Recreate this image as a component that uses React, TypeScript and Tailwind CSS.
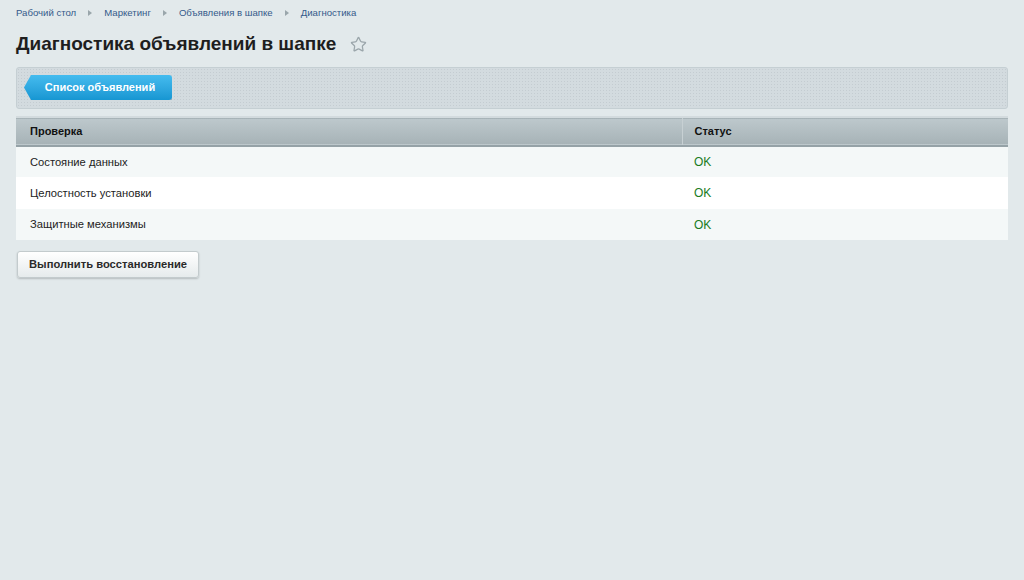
import { Star } from "lucide-react";

const crumbs = ["Рабочий стол", "Маркетинг", "Объявления в шапке", "Диагностика"];

const checks = [
  { name: "Состояние данных", status: "OK" },
  { name: "Целостность установки", status: "OK" },
  { name: "Защитные механизмы", status: "OK" },
];

export default function App() {
  return (
    <div className="min-h-[580px] bg-[#e2e9eb] px-4 font-['Liberation_Sans',Arial,sans-serif] text-[#222]">
      {/* Breadcrumbs */}
      <div className="flex h-[26px] items-center pt-px text-[9.6px] text-[#34598a]">
        {crumbs.map((c, i) => (
          <div key={c} className="flex items-center">
            {i > 0 && (
              <span className="mx-[12px] h-0 w-0 border-y-[3px] border-l-[4px] border-y-transparent border-l-[#9aa6ab]" />
            )}
            <span>{c}</span>
          </div>
        ))}
      </div>

      {/* Title */}
      <div className="flex h-[36px] items-center">
        <h1 className="text-[19px] font-bold text-[#1e1e1e]">Диагностика объявлений в шапке</h1>
        <Star className="ml-[14px] mt-px h-[17px] w-[17px] text-[#9ba6ab]" strokeWidth={1.8} />
      </div>

      {/* Toolbar */}
      <div className="mt-[5px] flex h-[42px] items-center rounded-[3px] border border-[#c5cfd3] bg-[#d3dbdf] bg-[radial-gradient(#c4ccd1_0.8px,transparent_0.9px)] bg-[length:3px_3px] pl-[7px]">
        <button className="-mt-px flex h-[25px] w-[148px] items-center justify-center rounded-r-[3px] bg-gradient-to-b from-[#44bcef] to-[#1696d2] pl-[4px] text-[11px] font-bold text-white shadow-[0_1px_1px_rgba(0,0,0,0.25)] [clip-path:polygon(7px_0,100%_0,100%_100%,7px_100%,0_50%)]">
          Список объявлений
        </button>
      </div>

      {/* Checks table */}
      <table className="mt-[7px] w-full border-collapse text-[11.2px]">
        <thead>
          <tr className="h-[29px] border-t-2 border-b-2 border-t-[#d3dbde] border-b-[#95a2a7] bg-gradient-to-b from-[#bdc8cc] to-[#a7b3b7] text-left text-[11px] font-bold text-[#111]">
            <th className="pl-[14px] font-bold">Проверка</th>
            <th className="w-[326px] border-l border-[#c7d0d3] pl-[12px] font-bold">Статус</th>
          </tr>
        </thead>
        <tbody>
          {checks.map((c, i) => (
            <tr key={c.name} className={i % 2 === 0 ? "h-[31px] bg-[#f4f8f8]" : "h-[32px] bg-white"}>
              <td className="pl-[14px]">{c.name}</td>
              <td className="pl-[12px] text-[12px] text-[#1a7c22]">{c.status}</td>
            </tr>
          ))}
        </tbody>
      </table>

      {/* Restore button */}
      <button className="ml-px mt-[11px] h-[27px] rounded-[3px] border border-[#c3cbcd] bg-gradient-to-b from-white to-[#e6ebec] px-[11px] text-[11.2px] font-bold text-[#2a2a2a] shadow-[0_1px_2px_rgba(0,0,0,0.2)]">
        Выполнить восстановление
      </button>
    </div>
  );
}
